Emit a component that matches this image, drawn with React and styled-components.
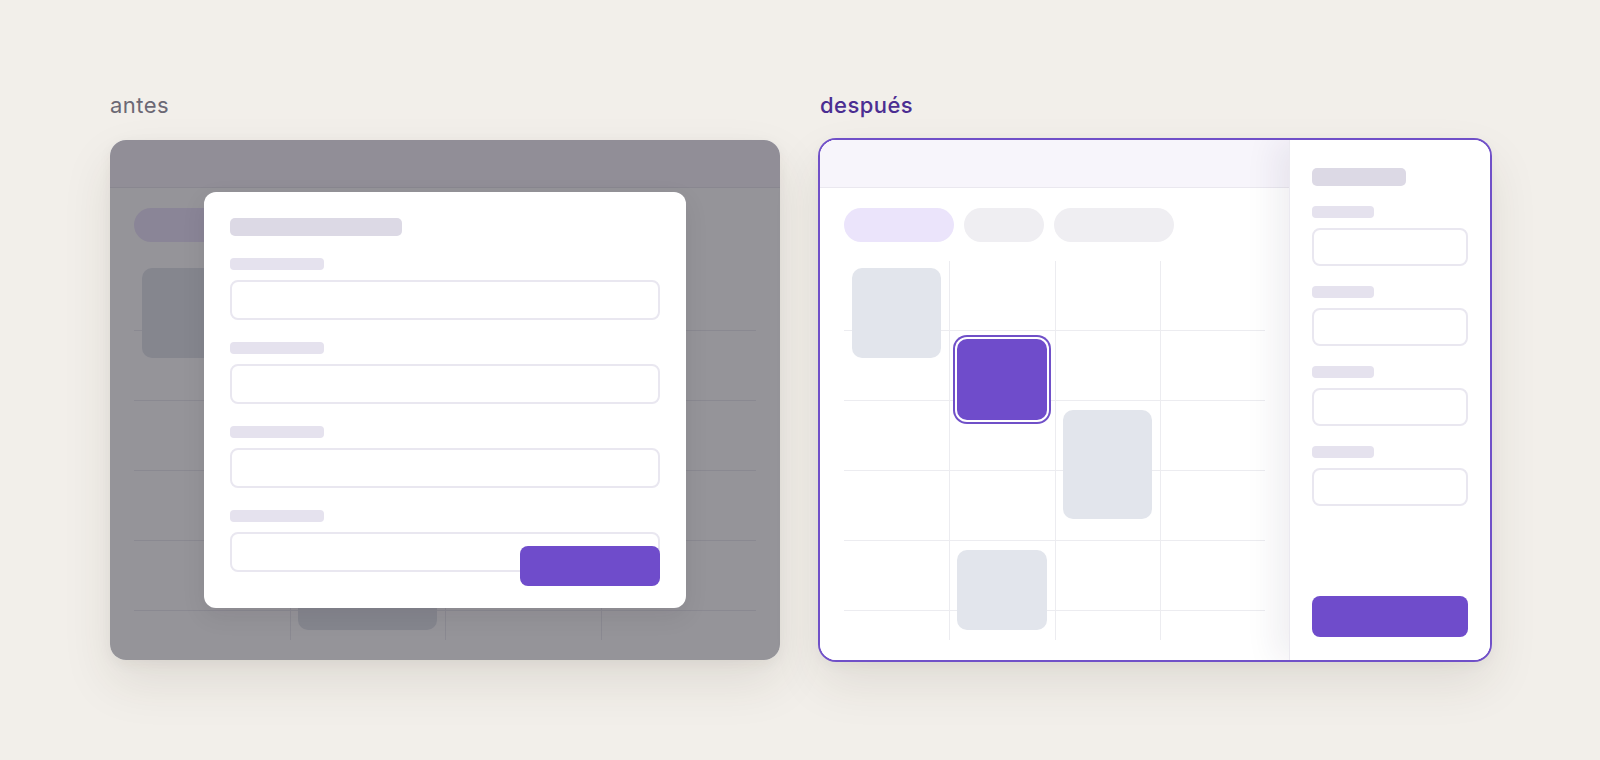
import React from "react";
import styled, { createGlobalStyle, css } from "styled-components";

const Global = createGlobalStyle`
  html, body { margin: 0; padding: 0; }
  body {
    background: #f2efea;
    font-family: Inter, "Noto Sans", "Liberation Sans", sans-serif;
    width: 1600px;
    height: 760px;
    overflow: hidden;
  }
  * { box-sizing: border-box; }
`;

const Page = styled.main`
  display: flex;
  justify-content: center;
  gap: 40px;
  padding-top: 92px;
`;

const Column = styled.section`
  width: 670px;
  display: flex;
  flex-direction: column;
  gap: 22px;
`;

const Caption = styled.h2`
  margin: 0;
  font-family: Inter, "Noto Sans", sans-serif;
  font-size: 22px;
  line-height: 26px;
  font-weight: ${(p) => (p.$accent ? 500 : 400)};
  letter-spacing: 0.02em;
  color: ${(p) => (p.$accent ? "#4b2e92" : "#6b6874")};
`;

const Card = styled.div`
  position: relative;
  width: 670px;
  height: 520px;
  border-radius: 16px;
  overflow: hidden;
  display: flex;
  background: #ffffff;
  box-shadow: 0 22px 50px rgba(60, 48, 34, 0.1), 0 4px 14px rgba(60, 48, 34, 0.05);
  ${(p) =>
    p.$highlight &&
    css`
      box-shadow: 0 0 0 2px #7050c8, 0 22px 50px rgba(60, 48, 34, 0.1),
        0 4px 14px rgba(60, 48, 34, 0.05);
    `}
`;

const AppShell = styled.div`
  flex: 1;
  min-width: 0;
  display: flex;
  flex-direction: column;
  background: #ffffff;
`;

const AppHeader = styled.header`
  height: 48px;
  flex-shrink: 0;
  background: #f7f5fb;
  border-bottom: 1px solid #eae8ef;
`;

const AppBody = styled.div`
  flex: 1;
  min-height: 0;
  display: flex;
  flex-direction: column;
  gap: 18px;
  padding: 20px 24px 20px;
`;

const PillRow = styled.div`
  display: flex;
  gap: 10px;
`;

const Pill = styled.div`
  width: ${(p) => p.$w}px;
  height: 34px;
  border-radius: 17px;
  background: ${(p) => (p.$active ? "#ebe4fb" : "#efeef2")};
`;

const Calendar = styled.div`
  position: relative;
  flex: 1;
  min-height: 0;
  overflow: hidden;
  display: grid;
  grid-template-columns: repeat(4, 1fr);
  grid-auto-rows: 70px;
  align-content: start;
  padding-top: 1px;
`;

const Cell = styled.div`
  border-bottom: 1px solid #ececf0;
  border-left: 1px solid #ececf0;
  &:nth-child(4n + 1) {
    border-left: none;
  }
`;

const Event = styled.div`
  position: absolute;
  left: calc(${(p) => p.$col * 25}% + 8px);
  width: calc(25% - 16px);
  top: ${(p) => p.$top}px;
  height: ${(p) => p.$h}px;
  border-radius: 10px;
  background: #e2e5ec;
  ${(p) =>
    p.$selected &&
    css`
      background: #6f4ccb;
      box-shadow: 0 0 0 2px #ffffff, 0 0 0 4px #7050c8;
    `}
`;

const Overlay = styled.div`
  position: absolute;
  inset: 0;
  z-index: 2;
  background: rgba(20, 18, 28, 0.45);
  display: flex;
  align-items: center;
  justify-content: center;
`;

const Modal = styled.div`
  position: relative;
  width: 482px;
  height: 416px;
  padding: 26px;
  border-radius: 12px;
  background: #ffffff;
  display: flex;
  flex-direction: column;
  box-shadow: 0 8px 24px rgba(20, 16, 30, 0.08);
`;

const Bar = styled.div`
  width: ${(p) => p.$w}px;
  height: ${(p) => p.$h}px;
  border-radius: ${(p) => (p.$h > 14 ? 5 : 4)}px;
  background: ${(p) => (p.$title ? "#dcd9e5" : "#e5e2ee")};
  flex-shrink: 0;
`;

const Form = styled.div`
  display: flex;
  flex-direction: column;
  gap: ${(p) => p.$gap}px;
  margin-top: ${(p) => p.$gap}px;
`;

const Field = styled.div`
  display: flex;
  flex-direction: column;
  gap: 10px;
`;

const InputBox = styled.div`
  width: 100%;
  height: ${(p) => p.$h}px;
  border: 2px solid #e9e7f0;
  border-radius: 8px;
  background: #ffffff;
`;

const PrimaryButton = styled.button`
  border: none;
  padding: 0;
  height: ${(p) => p.$h || 40}px;
  border-radius: 8px;
  background: #6f4ccb;
  cursor: pointer;
`;

const ModalButton = styled(PrimaryButton)`
  position: absolute;
  right: 26px;
  bottom: 22px;
  width: 140px;
`;

const Panel = styled.aside`
  position: relative;
  z-index: 1;
  width: 201px;
  flex-shrink: 0;
  display: flex;
  flex-direction: column;
  padding: 28px 22px 23px;
  background: #ffffff;
  border-left: 1px solid #ebe9f0;
  box-shadow: -14px 0 30px rgba(40, 30, 70, 0.07);
`;

const PanelButton = styled(PrimaryButton)`
  margin-top: auto;
  width: 100%;
`;

const events = [
  { col: 0, top: 8, h: 90 },
  { col: 1, top: 79, h: 81, selected: true },
  { col: 2, top: 150, h: 109 },
  { col: 1, top: 290, h: 80 },
];

function CalendarApp() {
  return (
    <AppShell>
      <AppHeader />
      <AppBody>
        <PillRow>
          <Pill $w={110} $active />
          <Pill $w={80} />
          <Pill $w={120} />
        </PillRow>
        <Calendar>
          {Array.from({ length: 24 }, (_, i) => (
            <Cell key={i} />
          ))}
          {events.map((e, i) => (
            <Event key={i} $col={e.col} $top={e.top} $h={e.h} $selected={e.selected} />
          ))}
        </Calendar>
      </AppBody>
    </AppShell>
  );
}

function Fields({ labelW, inputH, gap }) {
  return (
    <Form $gap={gap}>
      {[0, 1, 2, 3].map((i) => (
        <Field key={i}>
          <Bar $w={labelW} $h={12} />
          <InputBox $h={inputH} />
        </Field>
      ))}
    </Form>
  );
}

export default function App() {
  return (
    <>
      <Global />
      <Page>
        <Column>
          <Caption>antes</Caption>
          <Card>
            <CalendarApp />
            <Overlay>
              <Modal>
                <Bar $w={172} $h={18} $title />
                <Fields labelW={94} inputH={40} gap={22} />
                <ModalButton aria-label="Guardar" />
              </Modal>
            </Overlay>
          </Card>
        </Column>
        <Column>
          <Caption $accent>después</Caption>
          <Card $highlight>
            <CalendarApp />
            <Panel>
              <Bar $w={94} $h={18} $title />
              <Fields labelW={62} inputH={38} gap={20} />
              <PanelButton $h={41} aria-label="Guardar" />
            </Panel>
          </Card>
        </Column>
      </Page>
    </>
  );
}
